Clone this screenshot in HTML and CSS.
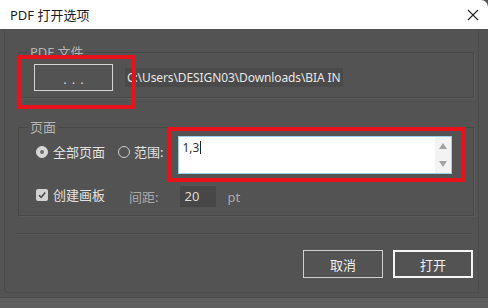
FILE: index.html
```html
<!DOCTYPE html>
<html lang="zh-CN">

<head>
    <meta charset="UTF-8">
    <title>PDF 打开选项</title>
    <link rel="stylesheet" href="styles.css">
</head>

<body>
    <div class="dialog">
        <div class="titlebar">
            <span class="title">PDF 打开选项</span>
            <svg class="close" width="12" height="12" viewBox="0 0 12 12">
                <path d="M1 1 L11 11 M11 1 L1 11" stroke="#222" stroke-width="1.1" fill="none" />
            </svg>
        </div>

        <div class="frame">
            <!-- PDF 文件 -->
            <fieldset class="group group-file">
                <legend>PDF 文件</legend>
                <div class="row">
                    <div class="btn-browse">...</div>
                    <div class="path">C:\Users\DESIGN03\Downloads\BIA IN</div>
                </div>
            </fieldset>

            <!-- 页面 -->
            <fieldset class="group group-pages">
                <legend>页面</legend>
                <div class="row row-range">
                    <span class="radio checked"></span>
                    <span class="label">全部页面</span>
                    <span class="radio"></span>
                    <span class="label">范围:</span>
                    <div class="range-field">
                        <span class="range-text">1,3</span><span class="caret"></span>
                        <div class="spin">
                            <span class="tri up"></span>
                            <span class="tri down"></span>
                        </div>
                    </div>
                </div>
                <div class="row row-board">
                    <span class="checkbox">
                        <svg width="12" height="12" viewBox="0 0 12 12">
                            <path d="M3 6.2 L5.2 8.4 L9.2 3.6" stroke="#4a4a4a" stroke-width="1.6" fill="none" />
                        </svg>
                    </span>
                    <span class="label">创建画板</span>
                    <span class="muted spacing-label">间距:</span>
                    <div class="num-field">20</div>
                    <span class="muted unit">pt</span>
                </div>
            </fieldset>

            <div class="separator"></div>

            <div class="actions">
                <div class="btn">取消</div>
                <div class="btn btn-default">打开</div>
            </div>
        </div>

        <div class="statusbar"></div>

        <!-- 红色标注框 -->
        <div class="mark mark-browse"></div>
        <div class="mark mark-range"></div>
    </div>
</body>

</html>
```

FILE: styles.css
```css
html {
    background-color: #535353;
}

body {
    margin: 0;
    font-family: "Noto Sans", "Noto Sans CJK SC", sans-serif;
    font-size: 13px;
    color: #e2e2e2;
}

.dialog {
    position: relative;
    width: 488px;
    height: 308px;
    display: flex;
    flex-direction: column;
    overflow: hidden;
}

.titlebar {
    height: 29px;
    flex: none;
    display: flex;
    align-items: center;
    justify-content: space-between;
    padding: 0 9px 0 10px;
    background-color: #fff;
    border-top-right-radius: 7px;
    box-sizing: border-box;
    color: #1a1a1a;
}

.title {
    font-size: 13px;
    line-height: 16px;
}

.frame {
    height: 263px;
    flex: none;
    margin: 0 9px 0 4px;
    border: 1px solid #4b4b4b;
    border-top: none;
    border-bottom-left-radius: 4px;
    display: flex;
    flex-direction: column;
}

.group {
    margin: 0;
    border: 1px solid #484848;
    box-shadow: 1px 1px 0 #5b5b5b;
    min-width: 0;
}

.group legend {
    padding: 0 2px;
    margin-left: -6px;
    line-height: 16px;
    color: #b4b4b4;
}

.group-file {
    margin: 15px 4px 0 13px;
    padding: 4px 15px 6px 15px;
}

.group-pages {
    margin: 21px 4px 0 13px;
    padding: 1px 15px 8px 17px;
}

.group-pages legend {
    margin-left: -8px;
}

.row {
    display: flex;
    align-items: center;
}

.btn-browse {
    width: 77px;
    height: 21px;
    padding-top: 4px;
    border: 1px solid #d4d4d4;
    display: flex;
    align-items: center;
    justify-content: center;
    letter-spacing: 5px;
    text-indent: 5px;
    line-height: 1;
    color: #cfcfcf;
}

.path {
    margin-left: 12px;
    height: 19px;
    width: 218px;
    padding-left: 2px;
    background-color: #4a4a4a;
    font-size: 12px;
    letter-spacing: -0.1px;
    line-height: 19px;
    white-space: nowrap;
    overflow: hidden;
    box-sizing: border-box;
    color: #e6e6e6;
}

.row-range {
    align-items: flex-start;
}

.row-range .radio,
.row-range .label {
    margin-top: 10px;
}

.radio {
    width: 12px;
    height: 12px;
    border-radius: 50%;
    border: 1px solid #cfcfcf;
    box-sizing: border-box;
    flex: none;
    position: relative;
}

.radio.checked {
    background-color: #d6d6d6;
    border-color: #d6d6d6;
}

.radio.checked::after {
    content: "";
    position: absolute;
    left: 3px;
    top: 3px;
    width: 4px;
    height: 4px;
    border-radius: 50%;
    background-color: #6d6d6d;
}

.label {
    line-height: 12px;
    margin-left: 5px;
    margin-right: 13px;
    white-space: nowrap;
}

.row-range .label:nth-of-type(4) {
    margin-left: 4px;
    margin-right: 14px;
}

.range-field {
    position: relative;
    width: 274px;
    height: 38px;
    box-sizing: border-box;
    border: 1px solid #9ccfe9;
    background-color: #fff;
    color: #333;
    font-size: 12px;
    padding: 3px 0 0 4px;
    line-height: 16px;
}

.caret {
    display: inline-block;
    width: 1px;
    height: 13px;
    background-color: #222;
    vertical-align: -2px;
    margin-left: 1px;
}

.spin {
    position: absolute;
    top: 0;
    right: 0;
    bottom: 0;
    width: 16px;
    background-color: #f3f3f3;
    display: flex;
    flex-direction: column;
    justify-content: space-between;
    align-items: center;
    padding: 6px 0 6px;
    box-sizing: border-box;
}

.tri {
    width: 0;
    height: 0;
    border-left: 4px solid transparent;
    border-right: 4px solid transparent;
}

.tri.up {
    border-bottom: 6px solid #a2a2a2;
}

.tri.down {
    border-top: 6px solid #a2a2a2;
}

.row-board {
    margin-top: 12px;
}

.checkbox {
    width: 12px;
    height: 12px;
    border-radius: 2px;
    background-color: #d2d2d2;
    flex: none;
    display: flex;
    margin-top: -3px;
}

.row-board .label {
    margin-top: -3px;
}

.muted {
    color: #a9a9a9;
}

.spacing-label {
    margin-left: 11px;
}

.num-field {
    width: 36px;
    height: 21px;
    margin-left: 21px;
    background-color: #474747;
    box-sizing: border-box;
    padding-left: 5px;
    line-height: 21px;
    color: #dcdcdc;
}

.unit {
    margin-left: 12px;
}

.separator {
    height: 1px;
    margin: 17px 6px 0 11px;
    background-color: #474747;
    box-shadow: 0 1px 0 #5a5a5a;
}

.actions {
    display: flex;
    justify-content: flex-end;
    gap: 10px;
    margin-top: 16px;
    padding-right: 5px;
}

.btn {
    width: 80px;
    height: 28px;
    box-sizing: border-box;
    border: 1px solid #cfcfcf;
    display: flex;
    align-items: center;
    justify-content: center;
    color: #f0f0f0;
}

.btn-default {
    border: 2px solid #f4f4f4;
}

.statusbar {
    flex: 1;
    margin-top: 4px;
    background-color: #5f5f5f;
    border-top: 1px solid #4a4a4a;
}

.mark {
    position: absolute;
    border: 4px solid #e8121a;
    box-sizing: border-box;
}

.mark-browse {
    left: 18px;
    top: 55px;
    width: 118px;
    height: 54px;
}

.mark-range {
    left: 168px;
    top: 127px;
    width: 297px;
    height: 55px;
}
```
